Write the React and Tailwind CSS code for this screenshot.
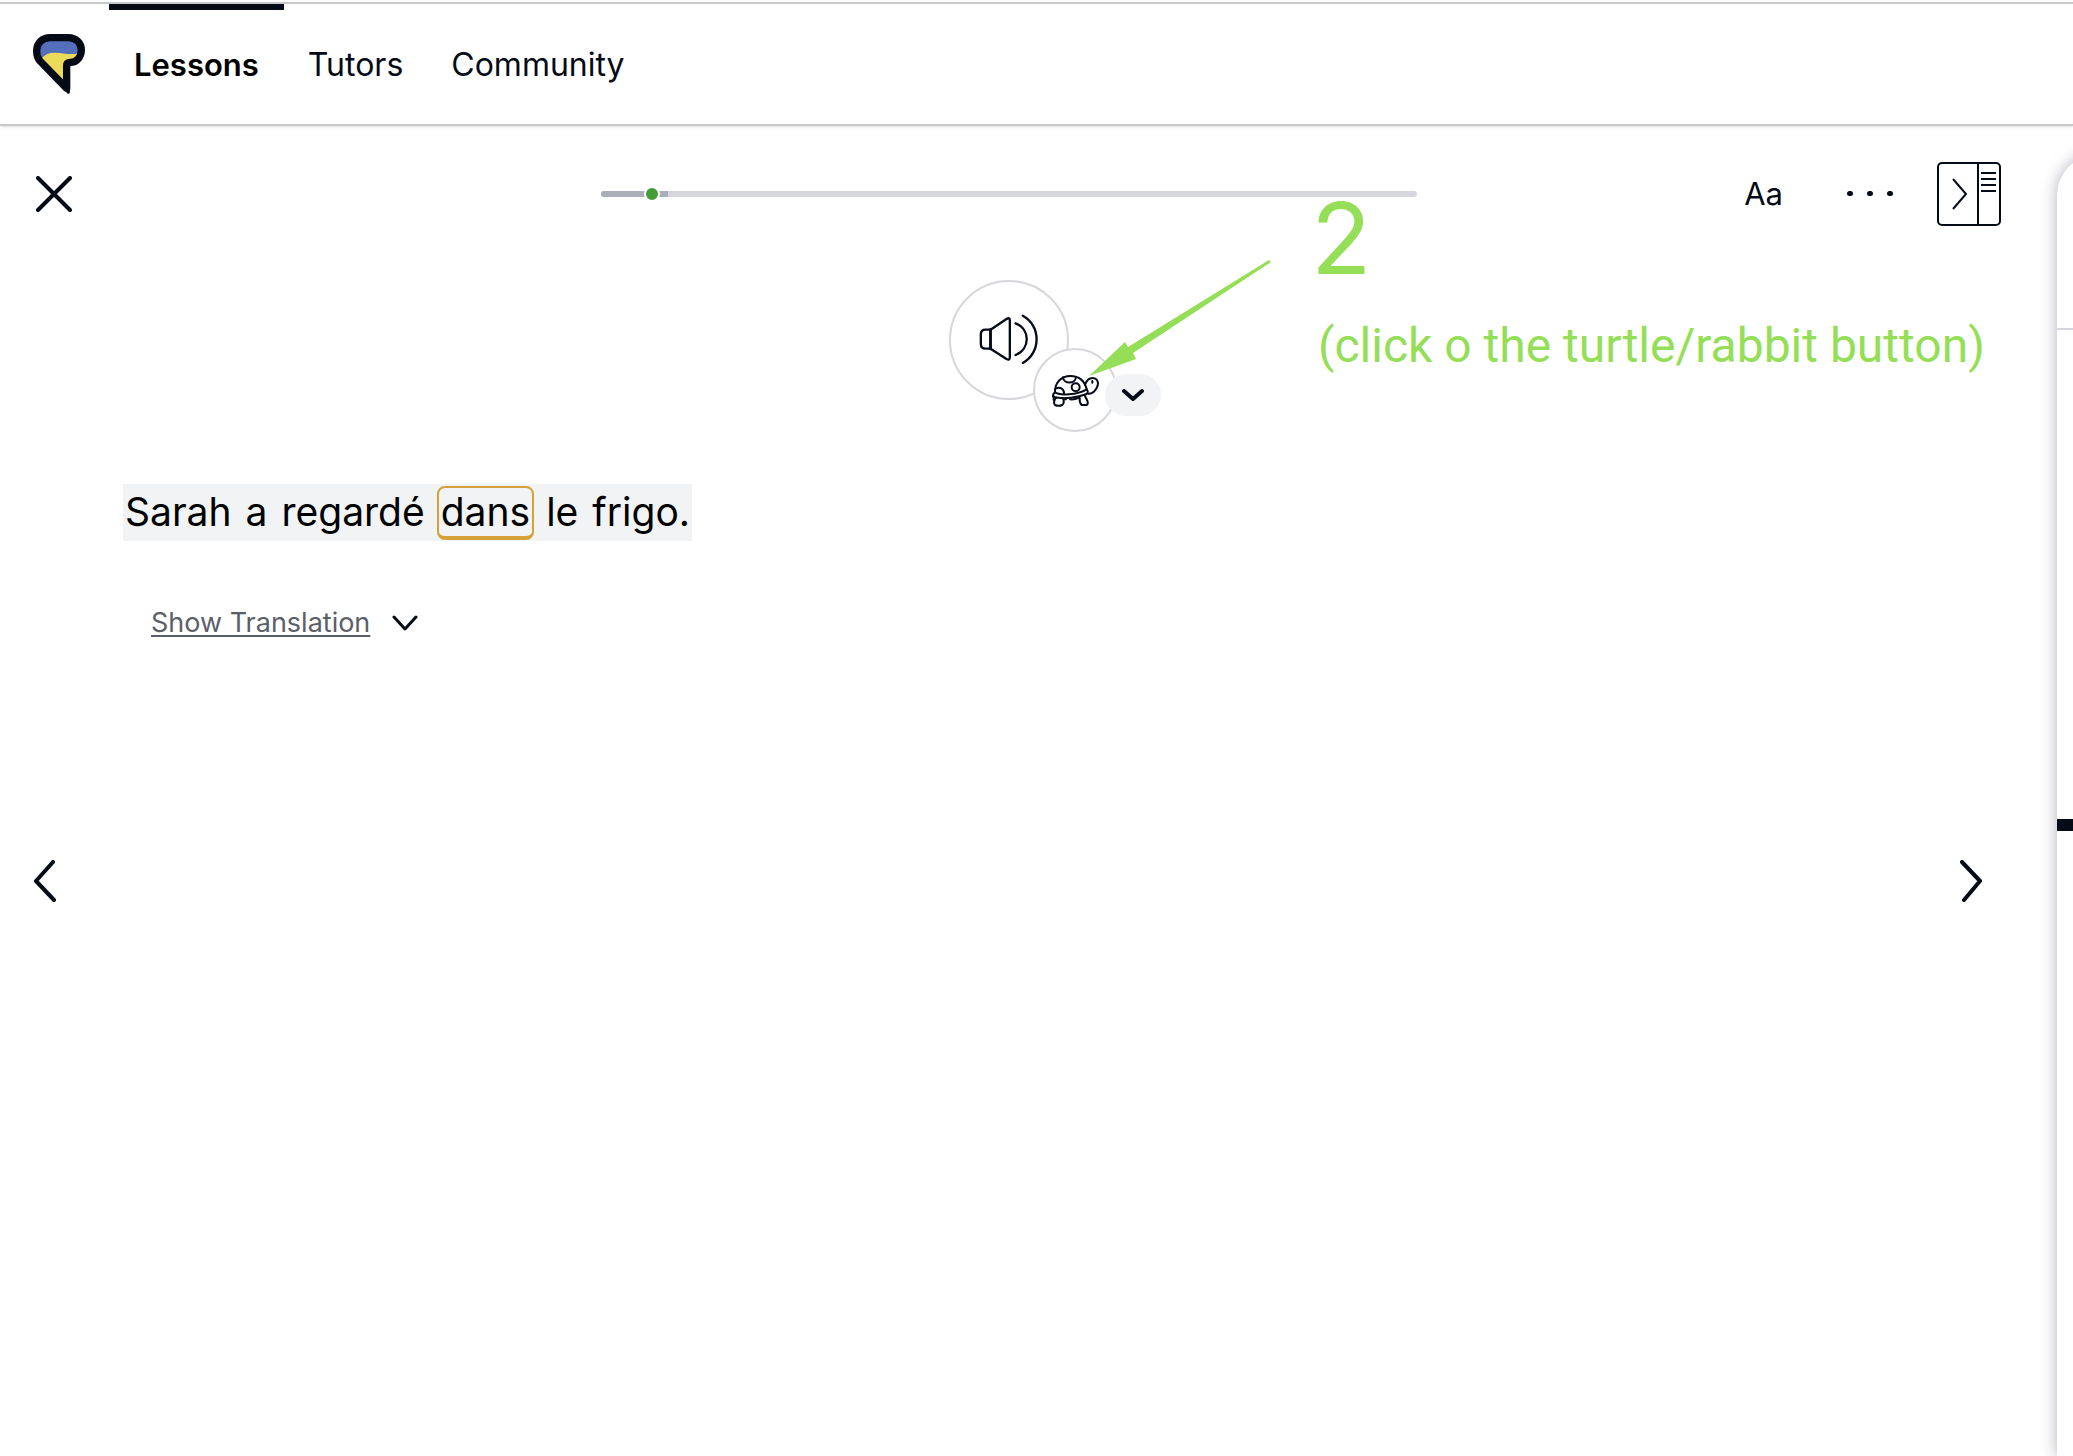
import { useState } from 'react';

const navLinks = ['Lessons', 'Tutors', 'Community'];
const words = ['Sarah', 'a', 'regardé', 'dans', 'le', 'frigo.'];

function Logo() {
  return (
    <svg viewBox="99 102 156 180" className="h-[60px] w-[52px]" aria-hidden="true">
      <path d="M118 150C118 133 134 118 152 118H205C222 118 237 133 237 150V166L190 178L126 176Z" fill="#5470bd" />
      <path d="M128 172C138 162 148 158 162 158C188 158 206 165 233 161C230 172 222 180 206 180C196 182 194 188 194 196V246L124 174Z" fill="#ecdb5a" />
      <path
        d="M150 113H205C228 113 244 129 244 150C244 172 229 187 211 187C203 187 200 190 200 197V265L120 183C113 175 110 164 110 152C110 129 127 113 150 113Z"
        fill="none" stroke="#050b16" strokeWidth="22" strokeLinejoin="round"
      />
      <path d="M196 262L205 276V262Z" fill="#050b16" stroke="#050b16" strokeWidth="10" strokeLinejoin="round" />
    </svg>
  );
}

function SpeakerIcon() {
  return (
    <svg viewBox="144 158 182 156" className="h-[52px] w-[61px]" fill="none" stroke="#050b16" strokeWidth="7" strokeLinecap="round" strokeLinejoin="round">
      <path d="M181 208L229 176Q239 170 239 180V291Q239 301 229 296L181 265Z" />
      <path d="M181 208H166Q152 208 152 222V251Q152 265 166 265H181" />
      <path d="M181 208V265" strokeWidth="8" />
      <path d="M256 189C301 206 301 266 256 284" />
      <path d="M278 166C333 196 333 277 278 308" />
    </svg>
  );
}

function TurtleIcon() {
  return (
    <svg viewBox="366 341 147 99" className="h-[33px] w-[49px]" fill="none" stroke="#050b16" strokeWidth="6" strokeLinecap="round" strokeLinejoin="round">
      <path d="M378 396C377 367 397 347 424 347C450 347 467 362 473 387" />
      <path d="M378 396C390 406 445 404 473 387" />
      <path d="M378 396C371 400 370 410 376 411C405 417 448 411 473 401C478 398 477 391 473 387" />
      <path d="M402 351C404 372 438 372 441 351" />
      <path d="M382 384C395 378 406 388 405 401" />
      <circle cx="440" cy="381" r="12" />
      <path d="M468 373C473 359 480 353 491 353C504 353 509 363 506 376C502 389 491 401 478 400" />
      <path d="M490 362V367" />
      <path d="M382 412C375 419 373 429 378 434C384 437 393 437 400 434C406 430 405 419 401 413" />
      <path d="M374 408V419" />
      <path d="M408 417H411M423 417C433 418 442 416 450 412" />
      <path d="M452 413C451 422 454 430 458 434H472C478 433 477 425 474 419L468 407" />
    </svg>
  );
}

function PanelIcon() {
  return (
    <svg viewBox="0 0 64 64" className="size-16" fill="none" stroke="#050b16" strokeWidth="2">
      <rect x="1" y="1" width="62" height="62" rx="4" />
      <path d="M41 1V63M44 11H59M44 17H59M44 23H59M44 29H59" />
      <path d="M16 17L29 32L16 47" />
    </svg>
  );
}

export default function App() {
  const [active, setActive] = useState('Lessons');

  return (
    <div className="flex min-h-screen flex-col overflow-hidden bg-white pt-[2px] font-['Inter','Liberation_Sans',sans-serif] text-[#050b16]">
      <header className="flex items-start border-y-2 border-[#c8c9cc] pl-[33px] shadow-sm">
        <a href="#home" aria-label="Home" className="mr-6 pt-[30px]">
          <Logo />
        </a>
        <nav className="flex">
          {navLinks.map((name) => (
            <a
              key={name}
              href={'#' + name.toLowerCase()}
              onClick={() => setActive(name)}
              className={
                active === name
                  ? 'h-[120px] border-t-6 border-[#050b16] px-[25px] pt-[33px] text-[31px] leading-[44px] font-semibold text-black'
                  : 'h-[120px] border-t-6 border-transparent px-6 pt-[33px] text-[32px] leading-[44px]'
              }
            >
              {name}
            </a>
          ))}
        </nav>
      </header>

      <div className="flex grow">
        <main className="relative flex min-w-0 grow flex-col pt-9 pr-14 pl-[17px]">
          {/* Toolbar */}
          <div className="grid grid-cols-[30fr_42fr_30fr] items-center">
            <button aria-label="Close lesson" className="flex h-16 w-[74px] items-center justify-center">
              <svg viewBox="0 0 36 36" className="size-9" stroke="#050b16" strokeWidth="4" strokeLinecap="round">
                <path d="M2 2L34 34M34 2L2 34" />
              </svg>
            </button>
            <div role="progressbar" aria-label="Lesson progress" aria-valuenow={6} className="flex h-[6px] items-center overflow-visible rounded-full bg-[#d5d7dc]">
              <div className="flex h-[6px] w-[8.3%] items-center justify-end rounded-l-full bg-[#abaeb8] pr-2">
                <span className="size-4 shrink-0 rounded-full border-2 border-white bg-[#459b35]" />
              </div>
            </div>
            <div className="flex items-center justify-end">
              <button className="mr-16 text-[31px]">Aa</button>
              <button aria-label="More options" className="mr-11 flex gap-[14px] pb-[2px]">
                <span className="h-[5px] w-[6px] rounded-full bg-[#050b16]" />
                <span className="h-[5px] w-[6px] rounded-full bg-[#050b16]" />
                <span className="h-[5px] w-[6px] rounded-full bg-[#050b16]" />
              </button>
              <button aria-label="Toggle side panel"><PanelIcon /></button>
            </div>
          </div>

          {/* Audio controls */}
          <div className="relative mx-auto mt-[54px] size-[120px]">
            <button aria-label="Play sentence" className="flex size-full items-center justify-center rounded-full border-2 border-[#d5d7dc] bg-white pr-[2px] pb-[2px]">
              <SpeakerIcon />
            </button>
            <button aria-label="Slow playback" className="absolute top-[68px] left-[84px] flex size-[84px] items-center justify-center rounded-full border-2 border-[#d5d7dc] bg-white">
              <TurtleIcon />
            </button>
            <button aria-label="Playback speed" className="absolute top-[94px] left-[156px] flex h-[42px] w-14 items-center justify-center rounded-full bg-[#f2f3f5]">
              <svg viewBox="0 0 22 14" className="h-[14px] w-[22px]" fill="none" stroke="#050b16" strokeWidth="4" strokeLinecap="round" strokeLinejoin="round">
                <path d="M2 3L11 11L20 3" />
              </svg>
            </button>
          </div>

          {/* Sentence */}
          <div className="mt-[84px] ml-[106px] flex">
            <p className="flex h-[57px] items-center gap-[10px] bg-[#f2f3f5] text-[39px] leading-[48px] text-black">
              {words.map((word) => (
                <span
                  key={word}
                  className={
                    word === 'dans'
                      ? 'rounded-lg border-2 border-b-4 border-[#d6a138] px-[2px]'
                      : 'border-t-2 border-b-4 border-transparent px-[2px]'
                  }
                >
                  {word}
                </span>
              ))}
            </p>
          </div>
          <button className="mt-[62px] ml-[134px] flex items-center gap-[22px] self-start text-[27px] leading-10 text-[#5b6068]">
            <span className="underline decoration-2 underline-offset-3">Show Translation</span>
            <svg viewBox="0 0 26 16" className="h-4 w-[26px]" fill="none" stroke="#050b16" strokeWidth="3" strokeLinecap="round" strokeLinejoin="round">
              <path d="M2 2L13 14L24 2" />
            </svg>
          </button>

          {/* Previous / next */}
          <div className="mt-[217px] flex justify-between pr-[19px] pl-[17px]">
            <button aria-label="Previous">
              <svg viewBox="0 0 22 42" className="h-[42px] w-[22px]" fill="none" stroke="#050b16" strokeWidth="4" strokeLinecap="round" strokeLinejoin="round">
                <path d="M19 2L2 21L20 40" />
              </svg>
            </button>
            <button aria-label="Next">
              <svg viewBox="0 0 22 42" className="h-[42px] w-[22px]" fill="none" stroke="#050b16" strokeWidth="4" strokeLinecap="round" strokeLinejoin="round">
                <path d="M2 2L20 21L4 40" />
              </svg>
            </button>
          </div>

          {/* Note drawn over the lesson */}
          <svg viewBox="0 0 184 118" className="pointer-events-none absolute top-[133px] left-[1088px] h-[118px] w-[184px]" fill="#95de57">
            <path d="M1 117L37 83L40 88L181 1L183 3L45 94L48 100Z" />
          </svg>
          <div className="pointer-events-none absolute top-[50px] left-[1311px] text-[#95de57]">
            <p className="text-[99px] leading-[124px]">2</p>
            <p className="pl-[7px] font-['Roboto','Liberation_Sans',sans-serif] text-5xl leading-[92px] whitespace-nowrap">(click o the turtle/rabbit button)</p>
          </div>
        </main>

        <aside className="flex w-4 shrink-0 pt-[29px]">
          <div className="w-[600px] shrink-0 rounded-tl-[40px] bg-white shadow-[0_0_16px_rgba(30,30,60,0.35)]">
            <div className="h-[175px] border-b-2 border-[#d5d7dc]" />
            <div className="mt-[489px] h-3 bg-[#050b16]" />
          </div>
        </aside>
      </div>
    </div>
  );
}
